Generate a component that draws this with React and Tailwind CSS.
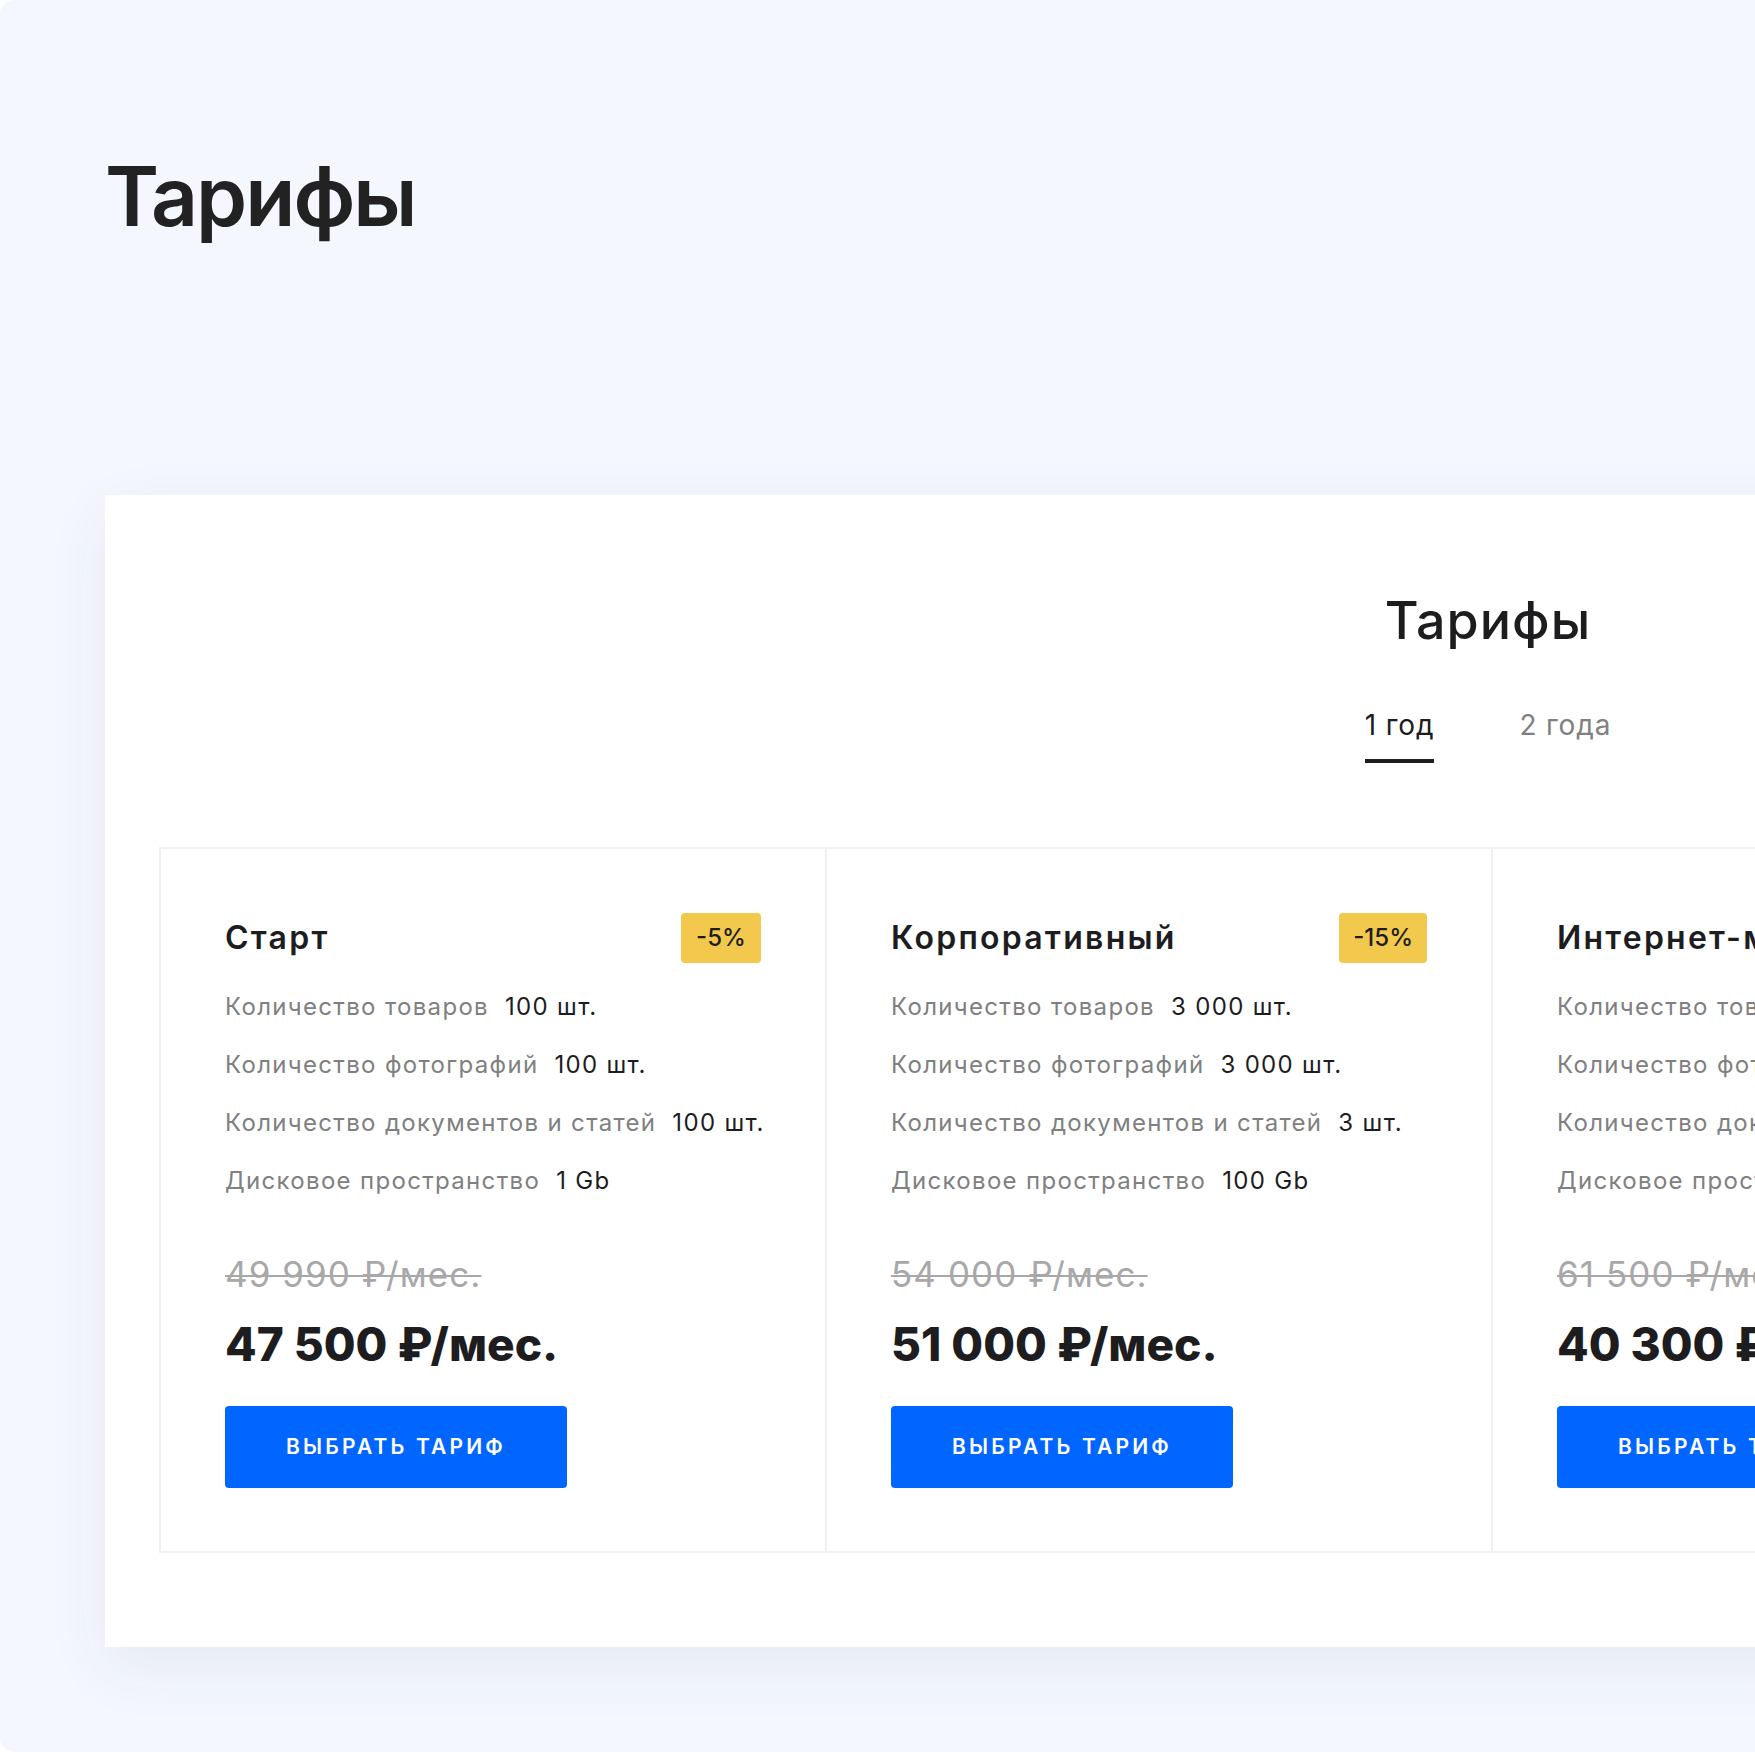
const plans = [
  {
    name: 'Старт',
    discount: '-5%',
    features: [
      ['Количество товаров', '100 шт.'],
      ['Количество фотографий', '100 шт.'],
      ['Количество документов и статей', '100 шт.'],
      ['Дисковое пространство', '1 Gb'],
    ],
    oldPrice: '49 990 ₽/мес.',
    price: '47 500 ₽/мес.',
  },
  {
    name: 'Корпоративный',
    discount: '-15%',
    features: [
      ['Количество товаров', '3 000 шт.'],
      ['Количество фотографий', '3 000 шт.'],
      ['Количество документов и статей', '3 шт.'],
      ['Дисковое пространство', '100 Gb'],
    ],
    oldPrice: '54 000 ₽/мес.',
    price: '51 000 ₽/мес.',
  },
  {
    name: 'Интернет-магазин',
    discount: '-35%',
    features: [
      ['Количество товаров', '10 000 шт.'],
      ['Количество фотографий', '10 000 шт.'],
      ['Количество документов и статей', '100 шт.'],
      ['Дисковое пространство', '500 Gb'],
    ],
    oldPrice: '61 500 ₽/мес.',
    price: '40 300 ₽/мес.',
  },
  {
    name: 'Премиум',
    discount: '-20%',
    features: [
      ['Количество товаров', '∞'],
      ['Количество фотографий', '∞'],
      ['Количество документов и статей', '1 000 шт.'],
      ['Дисковое пространство', '1 Tb'],
    ],
    oldPrice: '90 000 ₽/мес.',
    price: '72 000 ₽/мес.',
  },
]

function PlanCard({ plan, last }) {
  return (
    <article
      className={
        'flex flex-col px-[64px] pt-[64px] pb-[63px] ' + (last ? '' : 'border-r-2 border-[#f0f0f0]')
      }
    >
      <header className="flex h-[50px] items-center justify-between">
        <h3 className="whitespace-nowrap text-[32px] font-semibold leading-none tracking-[0.07em] text-[#1d1d1f]">
          {plan.name}
        </h3>
        <span className="flex h-[50px] min-w-[80px] items-center justify-center rounded-[4px] bg-[#f2c94c] px-[14px] text-[24px] font-medium text-[#1d1d1f]">
          {plan.discount}
        </span>
      </header>

      <ul className="mt-[27px] flex flex-col gap-[24px]">
        {plan.features.map(([label, value]) => (
          <li key={label} className="flex whitespace-nowrap text-[24px] leading-[34px] tracking-[0.055em]">
            <span className="text-[#808080]">{label}</span>
            <span className="ml-[16px] text-[#1d1d1f]">{value}</span>
          </li>
        ))}
      </ul>

      <p className="mt-[55px] whitespace-nowrap text-[35px] leading-[42px] tracking-[0.03em] text-[#a8a8a8] line-through decoration-[2px]">
        {plan.oldPrice}
      </p>
      <p className="mt-[21px] whitespace-nowrap text-[46px] font-extrabold leading-[56px] text-[#1d1d1f]">
        {plan.price}
      </p>

      <button
        type="button"
        className="mt-[34px] h-[82px] w-[342px] rounded-[4px] bg-[#0066ff] text-[21px] font-semibold uppercase tracking-[0.15em] text-white"
      >
        Выбрать тариф
      </button>
    </article>
  )
}

export default function App() {
  return (
    <div
      className="h-[1752px] w-[1755px] overflow-hidden bg-white"
      style={{ fontFamily: 'Inter, "Noto Sans", sans-serif' }}
    >
      <div className="h-[1752px] w-[3000px] rounded-[14px] bg-[#f4f7fd] pl-[105px]">
        <h1 className="pt-[156px] text-[82px] font-semibold leading-[82px] tracking-[-0.025em] text-[#222222]">
          Тарифы
        </h1>

        <section className="mt-[257px] w-[2766px] bg-white px-[54px] pt-[95px] pb-[94px] shadow-[0_20px_60px_rgba(40,60,110,0.07)]">
          <h2 className="text-center text-[52px] font-medium leading-[62px] tracking-[0.02em] text-[#1d1d1f]">
            Тарифы
          </h2>

          <div className="mt-[56px] flex justify-center gap-[85px] text-[28px] leading-[34px] tracking-[0.03em]">
            <button type="button" className="border-b-4 border-[#1d1d1f] pb-[17px] text-[#1d1d1f]">
              1 год
            </button>
            <button type="button" className="border-b-4 border-transparent pb-[17px] text-[#808080]">
              2 года
            </button>
          </div>

          <div className="mt-[84px] grid w-max grid-cols-[repeat(4,666px)] border-2 border-[#f0f0f0]">
            {plans.map((plan, i) => (
              <PlanCard key={plan.name} plan={plan} last={i === plans.length - 1} />
            ))}
          </div>
        </section>
      </div>
    </div>
  )
}
